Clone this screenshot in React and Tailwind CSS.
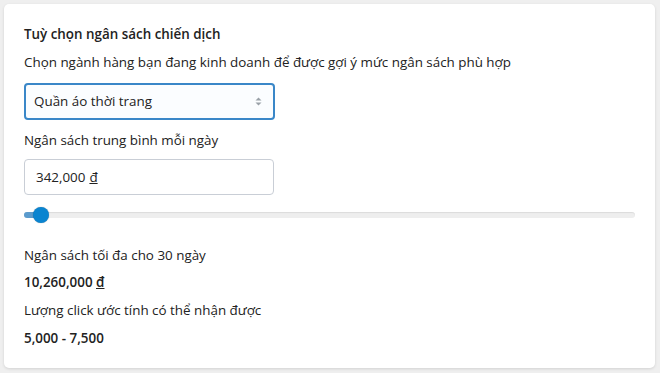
import React, { useState } from 'react';

const App = () => {
  const [category, setCategory] = useState('fashion');
  const [daily] = useState(342000);

  // slider position as percentage of track
  const pct = 2.8;

  return (
    <div className="min-h-[373px] w-[660px] bg-[#efefef] p-1 font-['Open_Sans',sans-serif] text-[13.4px] text-[#222]">
      <div className="h-[364px] w-[651px] rounded-[5px] bg-white pl-5 pr-5 pt-[21px] shadow-[0_1px_3px_rgba(0,0,0,0.12)]">
        <h2 className="text-[13.4px] font-semibold leading-[18px] text-[#222]">Tuỳ chọn ngân sách chiến dịch</h2>
        <p className="mt-[10px] leading-[18px]">
          Chọn ngành hàng bạn đang kinh doanh để được gợi ý mức ngân sách phù hợp
        </p>

        <div className="relative mt-[12px] w-[251px]">
          <select
            value={category}
            onChange={(e) => setCategory(e.target.value)}
            className="h-[37px] w-full appearance-none rounded-[4px] border-2 border-[#3a87c8] bg-[#fbfdff] pl-[8px] text-[13.4px] text-[#222] outline-none"
          >
            <option value="fashion">Quần áo thời trang</option>
          </select>
          <svg className="pointer-events-none absolute right-[13px] top-[13px]" width="7" height="11" viewBox="0 0 7 11">
            <path d="M0.5 4.5 L3.5 1.5 L6.5 4.5 Z" fill="#9aa1a8" />
            <path d="M0.5 6.5 L3.5 9.5 L6.5 6.5 Z" fill="#9aa1a8" />
          </svg>
        </div>

        <div className="mt-[11px] leading-[18px]">Ngân sách trung bình mỗi ngày</div>
        <div className="mt-[10px] flex h-[36px] w-[250px] items-center rounded-[4px] border border-[#c9ced6] pl-[11px]">
          {daily.toLocaleString('en-US')} <span className="ml-1 underline">đ</span>
        </div>

        <div className="relative mt-[12px] h-[16px] w-[611px]">
          <div className="absolute left-0 right-0 top-[5px] h-[6px] rounded-full bg-[#eeeeee] shadow-[inset_0_1px_1px_rgba(0,0,0,0.08)]" />
          <div
            className="absolute left-0 top-[5px] h-[6px] rounded-l-full bg-[#5b9bcd]"
            style={{ width: `${pct}%` }}
          />
          <div className="absolute left-[9px] top-0 h-[16px] w-[16px] rounded-full bg-[#0a84d0] shadow-[0_0_1px_rgba(0,0,0,0.4)]" />
        </div>

        <div className="mt-[23px] leading-[18px]">Ngân sách tối đa cho 30 ngày</div>
        <div className="mt-[9px] font-semibold leading-[18px]">
          10,260,000 <span className="underline">đ</span>
        </div>
        <div className="mt-[10px] leading-[18px]">Lượng click ước tính có thể nhận được</div>
        <div className="mt-[10px] font-semibold leading-[18px]">5,000 - 7,500</div>
      </div>
    </div>
  );
};

export default App;
